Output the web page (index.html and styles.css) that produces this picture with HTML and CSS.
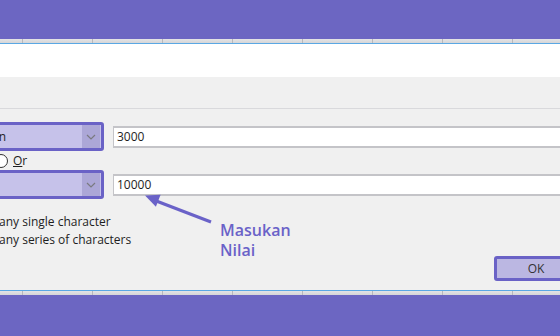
FILE: index.html
```html
<!DOCTYPE html>
<html lang="en">
<head>
  <meta charset="UTF-8">
  <title>Custom AutoFilter</title>
  <link rel="stylesheet" href="styles.css">
</head>
<body>
  <div class="frame">
    <div class="band"></div>
    <div class="col-strip"></div>
    <div class="sheet-top"></div>

    <div class="dialog">
      <div class="criteria">
        <div class="row">
          <div class="combo"><span class="combo-text">is greater than</span><span class="combo-btn"><svg width="10" height="6" viewBox="0 0 10 6"><path d="M1 1l4 4 4-4" fill="none" stroke="#7a7a80" stroke-width="1.2"/></svg></span></div>
          <div class="field">3000</div>
        </div>
        <div class="logic">
          <span class="radio"></span>
          <span class="logic-label"><u>O</u>r</span>
        </div>
        <div class="row">
          <div class="combo"><span class="combo-text"></span><span class="combo-btn"><svg width="10" height="6" viewBox="0 0 10 6"><path d="M1 1l4 4 4-4" fill="none" stroke="#7a7a80" stroke-width="1.2"/></svg></span></div>
          <div class="field">10000</div>
        </div>
      </div>

      <div class="hints">
        <p>any single character</p>
        <p>any series of characters</p>
      </div>

      <div class="actions">
        <button class="ok-button">OK</button>
      </div>

      <!-- annotation over the dialog -->
      <svg class="arrow" width="75" height="36" viewBox="0 0 75 36">
        <line x1="70" y1="31" x2="14" y2="9.4" stroke="#6a62c8" stroke-width="3.2"/>
        <path d="M4 4.5L14.9 15.8 19.6 3.8z" fill="#6a62c8"/>
      </svg>
      <div class="note">Masukan<br>Nilai</div>
    </div>

    <div class="sheet-bottom"></div>
    <div class="col-strip"></div>
    <div class="band band-bottom"></div>
  </div>
</body>
</html>
```

FILE: styles.css
```css
:root {
  --purple: #6c66c2;
  --purple-border: #6a62c6;
  --lavender: #c6c2ea;
  --lavender-dark: #aca7d7;
  --dialog-bg: #f0f0f0;
  --text: #1e1e1e;
}

body {
  margin: 0;
  font-family: 'Open Sans', 'Noto Sans', sans-serif;
  color: var(--text);
  background: var(--dialog-bg);
}

.frame {
  width: 560px;
  height: 336px;
  overflow: hidden;
}

.band {
  height: 39px;
  background: var(--purple);
}

.band-bottom {
  height: 41px;
}

.col-strip {
  height: 4px;
  background:
    repeating-linear-gradient(to right, transparent 0, transparent 22px, #b8b8bc 22px, #b8b8bc 23px, transparent 23px, transparent 70px),
    linear-gradient(#e4e4e6, #d6d6d8);
}

.sheet-top {
  height: 33px;
  background: white;
  border-top: 1px solid #5aa8e4;
}

.sheet-bottom {
  height: 1px;
  background: #5aa8e4;
}

.dialog {
  position: relative;
  box-sizing: border-box;
  height: 213px;
  padding-top: 31px;
  background: var(--dialog-bg);
}

.criteria {
  border-top: 1px solid #d9d9dc;
  padding-top: 13px;
}

.row {
  display: flex;
  align-items: center;
  gap: 9px;
  margin-left: -46px;
}

.combo {
  flex-shrink: 0;
  box-sizing: border-box;
  width: 150px;
  height: 29px;
  border: 3px solid var(--purple-border);
  border-radius: 3px;
  background: var(--lavender);
  display: flex;
  align-items: center;
  justify-content: space-between;
  padding-right: 1px;
  overflow: hidden;
}

.combo-text {
  font-size: 12px;
  white-space: nowrap;
  direction: rtl;
  overflow: hidden;
  width: 45px;
  text-align: right;
  margin-left: 4px;
}

.combo-text:empty {
  width: 0;
}

.combo-btn {
  width: 18px;
  height: 23px;
  background: var(--lavender-dark);
  display: flex;
  align-items: center;
  justify-content: center;
}

.field {
  flex-shrink: 0;
  box-sizing: border-box;
  width: 470px;
  height: 22px;
  border: 1px solid #c4c4c8;
  border-width: 2px 1px 2px 1px;
  background: white;
  font-size: 12px;
  line-height: 18px;
  padding-left: 3px;
}

.logic {
  display: flex;
  align-items: center;
  gap: 5px;
  height: 19px;
  margin-left: -6px;
}

.radio {
  box-sizing: border-box;
  width: 14px;
  height: 14px;
  border: 1px solid #333;
  border-radius: 50%;
  background: white;
}

.logic-label {
  font-size: 12px;
}

.hints {
  margin-top: 14px;
  margin-left: -1px;
}

.hints p {
  margin: 0;
  font-size: 12px;
  line-height: 18px;
}

.actions {
  display: flex;
  justify-content: flex-end;
  margin-top: 7px;
  margin-right: -18px;
}

.ok-button {
  box-sizing: border-box;
  width: 84px;
  height: 25px;
  border: 3px solid var(--purple-border);
  border-radius: 3px;
  background: #bbb7e2;
  font-family: inherit;
  font-size: 12px;
  color: #333;
  padding: 0;
}

.arrow {
  position: absolute;
  left: 141px;
  top: 114px;
}

.note {
  position: absolute;
  left: 220px;
  top: 143px;
  font-size: 16px;
  font-weight: 600;
  line-height: 20px;
  color: #6a62c8;
}
```
